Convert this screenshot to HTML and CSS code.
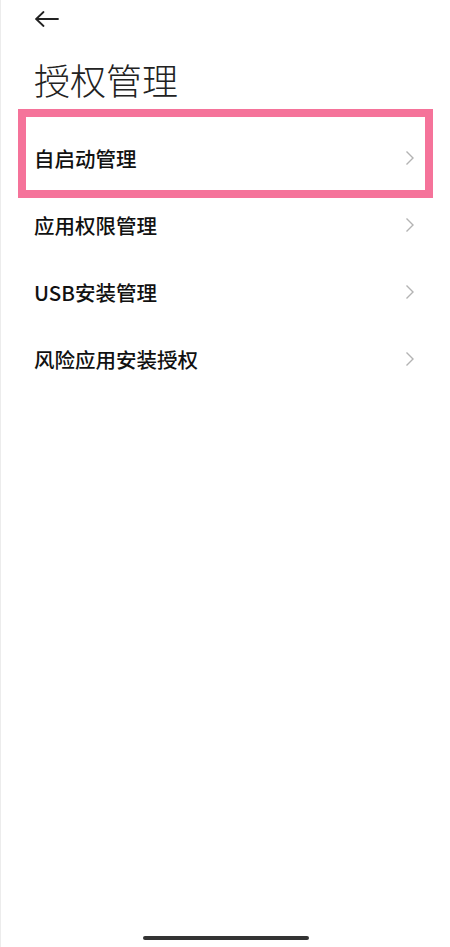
FILE: index.html
```html
<!doctype html>
<html>
<head>
<meta charset="utf-8">
<title>授权管理</title>
<link rel="stylesheet" href="styles.css">
</head>
<body>
<div class="page">
<!--顶部返回栏-->
<div class="topbar">
<svg class="back" width="26" height="16" viewBox="0 0 26 16"><path d="M24 8H2M9.5 1L2.2 8l7.3 7" fill="none" stroke="#222" stroke-width="1.8" stroke-linecap="round" stroke-linejoin="round"/></svg>
</div>
<h1 class="title">授权管理</h1>
<!--设置项列表-->
<ul class="list">
<li class="row"><span>自启动管理</span><svg class="chev" width="10" height="16" viewBox="0 0 10 16"><path d="M1.5 1.5l6.5 6.5-6.5 6.5" fill="none" stroke="#b3b3b3" stroke-width="1.4"/></svg></li>
<li class="row"><span>应用权限管理</span><svg class="chev" width="10" height="16" viewBox="0 0 10 16"><path d="M1.5 1.5l6.5 6.5-6.5 6.5" fill="none" stroke="#b3b3b3" stroke-width="1.4"/></svg></li>
<li class="row"><span>USB安装管理</span><svg class="chev" width="10" height="16" viewBox="0 0 10 16"><path d="M1.5 1.5l6.5 6.5-6.5 6.5" fill="none" stroke="#b3b3b3" stroke-width="1.4"/></svg></li>
<li class="row"><span>风险应用安装授权</span><svg class="chev" width="10" height="16" viewBox="0 0 10 16"><path d="M1.5 1.5l6.5 6.5-6.5 6.5" fill="none" stroke="#b3b3b3" stroke-width="1.4"/></svg></li>
</ul>
<!--标注框-->
<div class="mark"></div>
<div class="homebar"></div>
</div>
</body>
</html>
```
FILE: styles.css
```css
*{
	margin:0;
	padding:0;
}
body
{
	background:#fff;
	font-family:"Noto Sans CJK SC","Noto Sans",sans-serif;
	color:#111;
}
.page
{
	position:relative;
	height:947px;
	border-left:1px solid #ececec;
	box-sizing:border-box;
	display:flex;
	flex-direction:column;
}
.topbar
{
	height:37px;
	padding-left:33px;
	display:flex;
	align-items:center;
}
.back
{
	display:block;
}
.title
{
	margin-top:18px;
	padding-left:33px;
	font-size:36px;
	line-height:48px;
	font-weight:300;
	color:#222;
	letter-spacing:0;
}
.list
{
	list-style:none;
	margin-top:21px;
}
.row
{
	height:67px;
	padding:0 33px;
	display:flex;
	align-items:center;
	justify-content:space-between;
	font-size:20.5px;
	font-weight:500;
}
.chev
{
	display:block;
	margin-right:2px;
}
/*粉色标注框*/
.mark
{
	position:absolute;
	left:17px;
	top:109px;
	width:415px;
	height:89px;
	border:8px solid #f5739a;
	box-sizing:border-box;
}
.homebar
{
	margin-top:auto;
	margin-bottom:7px;
	align-self:center;
	width:166px;
	height:4px;
	border-radius:2px;
	background:#333;
}
```
